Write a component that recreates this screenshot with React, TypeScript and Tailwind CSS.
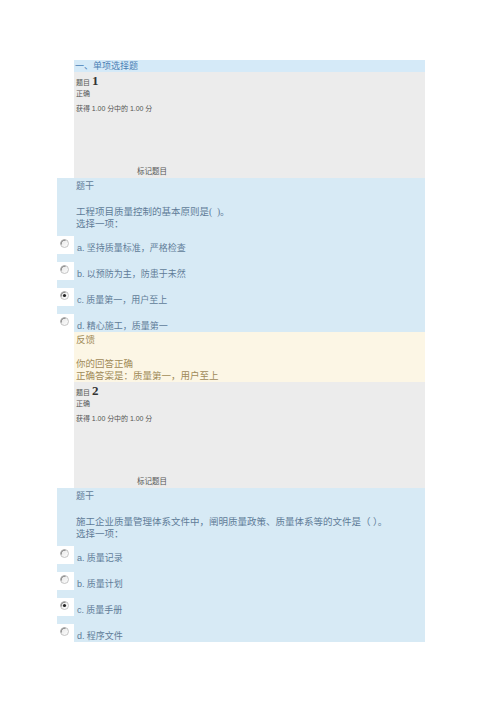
import React from 'react';

type Option = { key: string; text: string; checked?: boolean };

type Question = {
	no: number;
	stem: string;
	options: Option[];
	feedback?: { answer: string };
};

const questions: Question[] = [
	{
		no: 1,
		stem: '工程项目质量控制的基本原则是(  )。',
		options: [
			{ key: 'a', text: '坚持质量标准，严格检查' },
			{ key: 'b', text: '以预防为主，防患于未然' },
			{ key: 'c', text: '质量第一，用户至上', checked: true },
			{ key: 'd', text: '精心施工，质量第一' },
		],
		feedback: { answer: '质量第一，用户至上' },
	},
	{
		no: 2,
		stem: '施工企业质量管理体系文件中，阐明质量政策、质量体系等的文件是（ ）。',
		options: [
			{ key: 'a', text: '质量记录' },
			{ key: 'b', text: '质量计划' },
			{ key: 'c', text: '质量手册', checked: true },
			{ key: 'd', text: '程序文件' },
		],
	},
];

const cjk = "font-['Liberation_Serif','Noto_Sans_CJK_SC',serif]";

const Radio = ({ checked }: { checked?: boolean }) => (
	<div className="w-[17px] h-[18px] bg-white shrink-0 pt-[3px] pl-[3px]">
		<svg width="9" height="9" viewBox="0 0 9 9">
			<defs>
				<linearGradient id="rg" x1="0" y1="0" x2="1" y2="1">
					<stop offset="0" stopColor="#e4e4e4" />
					<stop offset="1" stopColor="#ffffff" />
				</linearGradient>
			</defs>
			<circle cx="4.5" cy="4.5" r="4" fill="url(#rg)" stroke="#b8b8b8" strokeWidth="0.8" />
			<path d="M1.2 5.5 A3.6 3.6 0 0 1 5.5 1.2" fill="none" stroke="#6a6a6a" strokeWidth="0.9" />
			{checked && <circle cx="4.5" cy="4.5" r="1.6" fill="#222" />}
		</svg>
	</div>
);

const InfoBlock = ({ no }: { no: number }) => (
	<div className="ml-[17px] h-[106px] bg-[#ececec] pl-[2px] flex flex-col text-[#555]">
		<div className="flex items-end h-[16px] gap-[2px]">
			<span className={`${cjk} text-[7px] leading-[10px]`}>题目</span>
			<span className="font-['Liberation_Serif',serif] font-bold text-[13px] leading-[14px] text-[#333]">{no}</span>
		</div>
		<div className={`${cjk} text-[7px] leading-[9px] mt-[2px]`}>正确</div>
		<div className={`${cjk} text-[7px] leading-[9px] mt-[5px]`}>
			获得 <span className="font-['Liberation_Sans',sans-serif]">1.00</span> 分中的{' '}
			<span className="font-['Liberation_Sans',sans-serif]">1.00</span> 分
		</div>
		<div className={`${cjk} text-[7.5px] leading-[9px] mt-auto mb-[2px] ml-[61px]`}>标记题目</div>
	</div>
);

const QuestionBlock = ({ q }: { q: Question }) => (
	<div className="bg-[#d7eaf5] text-[#5f7c98]">
		<div className={`ml-[17px] pl-[2px] ${cjk}`}>
			<div className="text-[9px] leading-[12px] pt-[2px]">题干</div>
			<div className="text-[9.5px] leading-[12px] mt-[14px] whitespace-pre">{q.stem}</div>
			<div className="text-[9.5px] leading-[12px]">选择一项：</div>
		</div>
		<div className="mt-[6px] flex flex-col gap-[8px]">
			{q.options.map((o) => (
				<div key={o.key} className="flex items-end h-[18px]">
					<Radio checked={o.checked} />
					<div className={`ml-[3px] text-[9px] leading-[11px] ${cjk}`}>
						<span className="font-['Liberation_Sans',sans-serif]">{o.key}.</span> {o.text}
					</div>
				</div>
			))}
		</div>
	</div>
);

const Feedback = ({ answer }: { answer: string }) => (
	<div className={`ml-[17px] h-[50px] bg-[#fcf6e5] pl-[2px] text-[#a08a58] ${cjk}`}>
		<div className="text-[9.5px] leading-[12px] pt-[2px]">反馈</div>
		<div className="text-[9.5px] leading-[12px] mt-[12px]">你的回答正确</div>
		<div className="text-[9.5px] leading-[12px]">正确答案是：{answer}</div>
	</div>
);

export default function App() {
	return (
		<div className="w-[500px] h-[707px] bg-white pt-[60px]">
			<div className="ml-[57px] w-[368px]">
				<div className={`ml-[17px] h-[12px] bg-[#d5eaf8] pl-[1px] text-[9px] leading-[12px] text-[#4a7fb5] ${cjk}`}>
					一、单项选择题
				</div>
				{questions.map((q) => (
					<div key={q.no}>
						<InfoBlock no={q.no} />
						<QuestionBlock q={q} />
						{q.feedback && <Feedback answer={q.feedback.answer} />}
					</div>
				))}
			</div>
		</div>
	);
}
